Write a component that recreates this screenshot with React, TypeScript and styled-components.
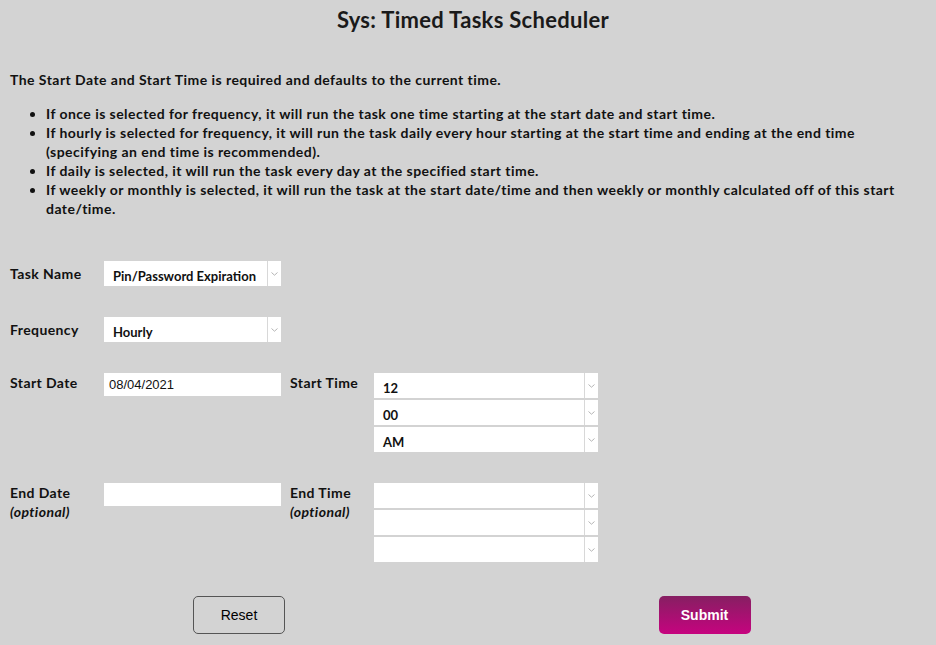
import styled, { createGlobalStyle } from 'styled-components';

const GlobalStyle = createGlobalStyle`
  html, body {
    margin: 0;
    padding: 0;
    background: #d3d3d3;
  }
  body {
    font-family: Lato, "Open Sans", sans-serif;
    color: #111;
  }
`;

const bullets = [
  'If once is selected for frequency, it will run the task one time starting at the start date and start time.',
  'If hourly is selected for frequency, it will run the task daily every hour starting at the start time and ending at the end time (specifying an end time is recommended).',
  'If daily is selected, it will run the task every day at the specified start time.',
  'If weekly or monthly is selected, it will run the task at the start date/time and then weekly or monthly calculated off of this start date/time.',
];

function Chevron() {
  return (
    <svg width="7" height="4" viewBox="0 0 7 4">
      <path d="M0.5 0.5 L3.5 3.2 L6.5 0.5" fill="none" stroke="#b5b5b5" strokeWidth="1" />
    </svg>
  );
}

function Select({ value, width }: { value?: string; width: number }) {
  return (
    <SelectBox $width={width}>
      <SelectValue>{value}</SelectValue>
      <SelectArrow>
        <Chevron />
      </SelectArrow>
    </SelectBox>
  );
}

function App() {
  return (
    <>
      <GlobalStyle />
      <Page>
        <Title>Sys: Timed Tasks Scheduler</Title>
        <Intro>The Start Date and Start Time is required and defaults to the current time.</Intro>
        <BulletList>
          {bullets.map((text, key) => (
            <li key={key}>{text}</li>
          ))}
        </BulletList>

        <Form>
          <Row $center>
            <Label>Task Name</Label>
            <Select value="Pin/Password Expiration" width={177} />
          </Row>

          <Row $center>
            <Label>Frequency</Label>
            <Select value="Hourly" width={177} />
          </Row>

          <Row>
            <Label>Start Date</Label>
            <DateInput defaultValue="08/04/2021" />
            <Label $narrow>Start Time</Label>
            <TimeStack>
              <Select value="12" width={224} />
              <Select value="00" width={224} />
              <Select value="AM" width={224} />
            </TimeStack>
          </Row>

          <Row>
            <Label>
              End Date
              <Optional>(optional)</Optional>
            </Label>
            <DateInput defaultValue="" />
            <Label $narrow>
              End Time
              <Optional>(optional)</Optional>
            </Label>
            <TimeStack>
              <Select width={224} />
              <Select width={224} />
              <Select width={224} />
            </TimeStack>
          </Row>
        </Form>

        <Actions>
          <ResetButton>Reset</ResetButton>
          <SubmitButton>Submit</SubmitButton>
        </Actions>
      </Page>
    </>
  );
}

export default App;

const Page = styled.div`
  padding: 0 0 0 10px;
  width: 926px;
`;

const Title = styled.h1`
  margin: 0;
  padding-top: 7px;
  text-align: center;
  font-size: 22px;
  font-weight: 700;
  letter-spacing: 0.3px;
  line-height: 26px;
  color: #1a1a1a;
`;

const Intro = styled.p`
  margin: 37px 0 0;
  font-size: 14px;
  font-weight: 700;
  letter-spacing: 0.45px;
  line-height: 19px;
`;

const BulletList = styled.ul`
  margin: 15px 30px 0 0;
  padding-left: 36px;
  font-size: 14px;
  font-weight: 700;
  letter-spacing: 0.45px;
  line-height: 19px;
`;

const Form = styled.div`
  display: flex;
  flex-direction: column;
  gap: 31px;
  margin-top: 43px;
`;

const Row = styled.div<{ $center?: boolean }>`
  display: flex;
  align-items: ${(p) => (p.$center ? 'center' : 'flex-start')};
`;

const Label = styled.div<{ $narrow?: boolean }>`
  width: ${(p) => (p.$narrow ? '84px' : '94px')};
  margin-left: ${(p) => (p.$narrow ? '9px' : '0')};
  font-size: 14px;
  font-weight: 700;
  letter-spacing: 0.4px;
  line-height: 19px;
  display: flex;
  flex-direction: column;
  color: #111;
`;

const Optional = styled.span`
  font-style: italic;
`;

const TimeStack = styled.div`
  display: flex;
  flex-direction: column;
  gap: 2px;
`;

const SelectBox = styled.div<{ $width: number }>`
  width: ${(p) => p.$width}px;
  height: 25px;
  background: #fff;
  display: flex;
  align-items: stretch;
  box-sizing: border-box;
`;

const SelectValue = styled.div`
  flex: 1;
  padding: 6px 0 0 9px;
  font-size: 13px;
  font-weight: 700;
  line-height: 18px;
  color: #111;
`;

const SelectArrow = styled.div`
  width: 13px;
  border-left: 1px solid #d8d8d8;
  display: flex;
  align-items: center;
  justify-content: center;
`;

const DateInput = styled.input`
  width: 177px;
  height: 23px;
  box-sizing: border-box;
  border: none;
  outline: none;
  background: #fff;
  padding: 0 5px;
  font-family: "Liberation Sans", Arial, sans-serif;
  font-size: 13px;
  color: #111;
`;

const Actions = styled.div`
  display: grid;
  grid-template-columns: 1fr 1fr;
  justify-items: center;
  margin-top: 34px;
`;

const ButtonBase = styled.button`
  width: 92px;
  height: 38px;
  border-radius: 5px;
  font-family: "Liberation Sans", Arial, sans-serif;
  font-size: 14px;
  cursor: pointer;
`;

const ResetButton = styled(ButtonBase)`
  background: transparent;
  border: 1px solid #555;
  color: #000;
  margin-left: -5px;
`;

const SubmitButton = styled(ButtonBase)`
  background: linear-gradient(#861f62, #c6037f);
  border: none;
  color: #fff;
  font-weight: 700;
`;
